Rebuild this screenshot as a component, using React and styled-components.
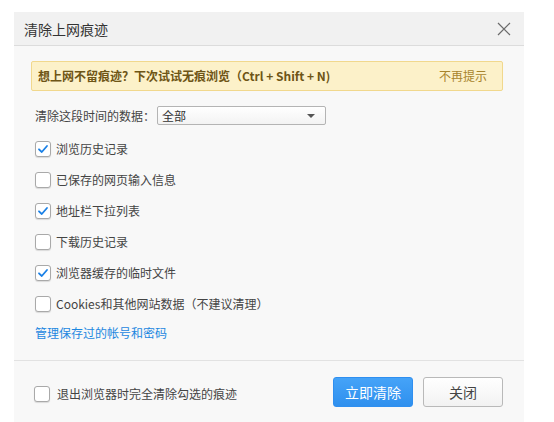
import React from 'react'
import styled, { createGlobalStyle } from 'styled-components'

const GlobalStyle = createGlobalStyle`
  html, body {
    margin: 0;
    padding: 0;
    background: #ffffff;
  }
  body {
    font-family: "Noto Sans CJK SC", "Noto Sans", sans-serif;
    color: #333;
  }
`

const items = [
  { label: '浏览历史记录', checked: true },
  { label: '已保存的网页输入信息', checked: false },
  { label: '地址栏下拉列表', checked: true },
  { label: '下载历史记录', checked: false },
  { label: '浏览器缓存的临时文件', checked: true },
  { label: 'Cookies和其他网站数据（不建议清理）', checked: false },
]

const CheckBox = ({ checked }) => (
  <Box>
    {checked && (
      <svg width='12' height='12' viewBox='0 0 12 12'>
        <path d='M2 6.3 L4.8 9 L10 3' fill='none' stroke='#1a80e6' strokeWidth='1.8' strokeLinecap='round' strokeLinejoin='round' />
      </svg>
    )}
  </Box>
)

const App = () => {
  return (
    <>
      <GlobalStyle />
      <Dialog>
        <TitleBar>
          <Title>清除上网痕迹</Title>
          <CloseIcon>
            <svg width='14' height='14' viewBox='0 0 14 14'>
              <path d='M1 1 L13 13 M13 1 L1 13' stroke='#6b6b6b' strokeWidth='1.2' fill='none' />
            </svg>
          </CloseIcon>
        </TitleBar>
        <Body>
          <Banner>
            <BannerText>想上网不留痕迹？下次试试无痕浏览（Ctrl + Shift + N)</BannerText>
            <BannerLink>不再提示</BannerLink>
          </Banner>
          <RangeRow>
            <RangeLabel>清除这段时间的数据：</RangeLabel>
            <Select>
              <span>全部</span>
              <Arrow />
            </Select>
          </RangeRow>
          <List>
            {items.map((item) => (
              <Row key={item.label}>
                <CheckBox checked={item.checked} />
                <Label>{item.label}</Label>
              </Row>
            ))}
          </List>
          <Link>管理保存过的帐号和密码</Link>
        </Body>
        <Footer>
          <FooterCheck>
            <CheckBox checked={false} />
            <Label>退出浏览器时完全清除勾选的痕迹</Label>
          </FooterCheck>
          <Buttons>
            <Button primary>立即清除</Button>
            <Button>关闭</Button>
          </Buttons>
        </Footer>
      </Dialog>
    </>
  )
}

const Dialog = styled.div`
  margin: 12px 0 0 14px;
  width: 510px;
  height: 410px;
  background: #f8f8f8;
  display: flex;
  flex-direction: column;
`

const TitleBar = styled.div`
  height: 33px;
  background: #f1f1f1;
  border-bottom: 1px solid #dcdcdc;
  display: flex;
  align-items: center;
  justify-content: space-between;
  padding: 0 13px 0 10px;
`

const Title = styled.div`
  font-size: 14px;
  color: #333;
  line-height: 20px;
`

const CloseIcon = styled.div`
  width: 14px;
  height: 14px;
  display: flex;
  margin-top: 1px;
`

const Body = styled.div`
  padding: 15px 21px 0 17px;
  height: 315px;
  box-sizing: border-box;
  border-bottom: 1px solid #e2e2e2;
`

const Banner = styled.div`
  height: 30px;
  box-sizing: border-box;
  background: #fcf1c9;
  border: 1px solid #f1d88d;
  border-radius: 2px;
  display: flex;
  align-items: center;
  justify-content: space-between;
  padding: 0 15px 0 6px;
`

const BannerText = styled.div`
  font-size: 12px;
  font-weight: bold;
  color: #6e5516;
  line-height: 16px;
`

const BannerLink = styled.div`
  font-size: 12px;
  color: #a8842c;
  line-height: 16px;
`

const RangeRow = styled.div`
  margin: 15px 0 0 4px;
  height: 19px;
  display: flex;
  align-items: center;
  font-size: 12px;
  color: #444;
`

const RangeLabel = styled.span`
  width: 122px;
  flex-shrink: 0;
  white-space: nowrap;
`

const Select = styled.div`
  width: 169px;
  height: 19px;
  box-sizing: border-box;
  border: 1px solid #b4b4b4;
  border-radius: 2px;
  background: linear-gradient(#ffffff, #f3f3f3);
  display: flex;
  align-items: center;
  justify-content: space-between;
  padding: 0 10px 0 4px;
  font-size: 12px;
  color: #333;
`

const Arrow = styled.div`
  width: 0;
  height: 0;
  border-left: 4px solid transparent;
  border-right: 4px solid transparent;
  border-top: 4px solid #555;
`

const List = styled.div`
  margin: 8px 0 0 4px;
  display: flex;
  flex-direction: column;
`

const Row = styled.div`
  height: 31px;
  display: flex;
  align-items: center;
  gap: 5px;
`

const Box = styled.div`
  width: 14px;
  height: 14px;
  border: 1px solid #a9a9a9;
  border-radius: 3px;
  background: #fff;
  box-shadow: 0 1px 1px rgba(0, 0, 0, 0.12);
  display: flex;
  align-items: center;
  justify-content: center;
  flex-shrink: 0;
`

const Label = styled.span`
  font-size: 12px;
  color: #444;
  line-height: 16px;
`

const Link = styled.div`
  margin: 4px 0 0 4px;
  height: 20px;
  line-height: 20px;
  font-size: 12px;
  color: #1c87e0;
`

const Footer = styled.div`
  flex: 1;
  display: flex;
  align-items: center;
  justify-content: space-between;
  padding: 0 21px 0 20px;
`

const FooterCheck = styled.div`
  display: flex;
  align-items: center;
  gap: 7px;
  margin-top: 4px;
`

const Buttons = styled.div`
  display: flex;
  gap: 10px;
`

const Button = styled.button`
  width: 80px;
  height: 30px;
  box-sizing: border-box;
  border-radius: 3px;
  font-family: inherit;
  font-size: 14px;
  padding: 0;
  cursor: pointer;
  border: 1px solid ${(p) => (p.primary ? '#2f8ff0' : '#b9b9b9')};
  background: ${(p) => (p.primary ? 'linear-gradient(#45a3f8, #2f90ee)' : 'linear-gradient(#ffffff, #f2f2f2)')};
  color: ${(p) => (p.primary ? '#ffffff' : '#444')};
`

export default App
